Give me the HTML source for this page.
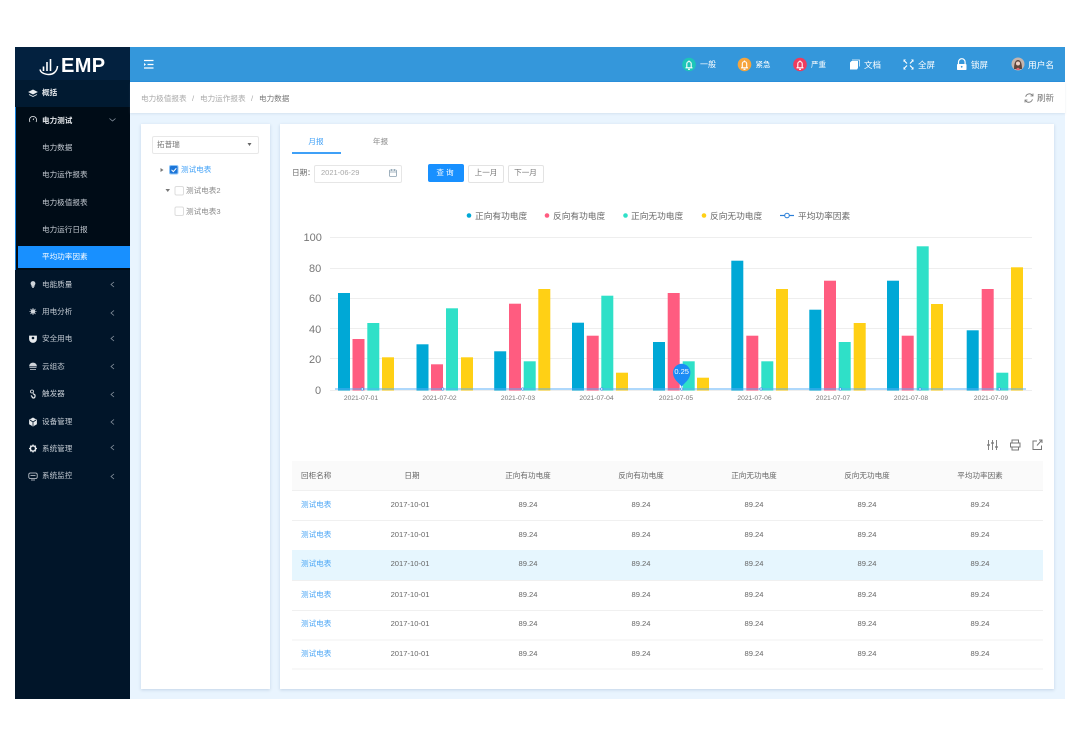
<!DOCTYPE html>
<html lang="zh"><head><meta charset="utf-8"><title>电力数据</title>
<style>
html,body{margin:0;padding:0;width:1080px;height:756px;overflow:hidden;background:#fff;font-family:"Liberation Sans","Noto Sans CJK SC",sans-serif}
#w{position:absolute;left:0;top:0;width:1080px;height:756px;filter:blur(.3px)}
.b{position:absolute}
.t{position:absolute;white-space:nowrap;line-height:12px;height:12px;font-size:7.6px}
.c{transform:translateX(-50%)}
.m{color:#c3cad2;left:42px}
.h{color:#fff}
.g{color:#8a8f96}
.d{color:#777;font-size:6.7px}
.y{color:#777;font-size:11px}
.l{color:#4ba6f5;left:301px;font-size:7.6px}
.k{color:#666;font-size:7.6px}
svg{position:absolute;overflow:visible}
</style></head><body><div id="w">
<div class="b" style="left:15px;top:47px;width:1050px;height:652px;background:#e9f4fe"></div>
<!-- sidebar -->
<div class="b" style="left:15px;top:47px;width:115px;height:652px;background:#011529"></div>
<div class="b" style="left:15px;top:47px;width:115px;height:33px;background:#03213f"></div>
<div class="b" style="left:15px;top:80px;width:115px;height:27px;background:#011a31"></div>
<div class="b" style="left:15px;top:107px;width:115px;height:163px;background:#000c17"></div>
<div class="b" style="left:15px;top:107px;width:1px;height:163px;background:#1480dc"></div>
<div class="b" style="left:17.5px;top:246px;width:112.5px;height:22px;background:#1890ff"></div>
<svg style="left:0;top:0" width="130" height="90" fill="none" stroke="#fff">
<path d="M40 69.500c1 5 10.500 6.500 14.500 3 1.500-1.300 2.800-3.500 3-6.500" stroke-width="1.500"/>
<path d="M43.500 71v-4.500M47 71V62M50.500 71V59" stroke-width="1.600"/>
</svg>
<div class="t" style="left:61px;top:56px;height:20px;line-height:20px;font-size:20px;font-weight:700;color:#fff;letter-spacing:.4px">EMP</div>
<div class="t m" style="top:87px;color:#e2e6ea;font-weight:700">概括</div>
<div class="t m" style="top:114.500px;color:#e2e6ea;font-weight:700">电力测试</div>
<div class="t m" style="top:141.500px">电力数据</div>
<div class="t m" style="top:169px">电力运作报表</div>
<div class="t m" style="top:196.500px">电力极值报表</div>
<div class="t m" style="top:223.500px">电力运行日报</div>
<div class="t m" style="top:251px;color:#fff">平均功率因素</div>
<div class="t m" style="top:278.500px">电能质量</div>
<div class="t m" style="top:305.500px">用电分析</div>
<div class="t m" style="top:333px">安全用电</div>
<div class="t m" style="top:360.500px">云组态</div>
<div class="t m" style="top:388px">触发器</div>
<div class="t m" style="top:415.500px">设备管理</div>
<div class="t m" style="top:442.500px">系统管理</div>
<div class="t m" style="top:470px">系统监控</div>
<svg style="left:0;top:0" width="130" height="490" fill="none" stroke="#8b96a2" stroke-width=".8">
<path d="M109.500 118.500l3 2.500 3-2.500"/>
<path d="M114 282l-3 2.500 3 2.500M114 310.500l-3 2.500 3 2.500M114 336l-3 2.500 3 2.500M114 364l-3 2.500 3 2.500M114 392l-3 2.500 3 2.500M114 419.500l-3 2.500 3 2.500M114 445l-3 2.500 3 2.500M114 474l-3 2.500 3 2.500"/>
<!-- menu icons -->
<path d="M29 92l4-2 4 2-4 2z" fill="#e8ebee" stroke="#e8ebee"/><path d="M29 94.500l4 2 4-2" stroke="#e8ebee"/>
<path d="M30 122a3.600 3.600 0 1 1 6 0" stroke="#e8ebee"/><path d="M33 120l1-1.500" stroke="#e8ebee"/>
<path d="M33 281.500a2 2 0 0 1 1.300 3.500l-.3 1.500h-2l-.3-1.500a2 2 0 0 1 1.300-3.500zM32 287.500h2" fill="#cfd4da" stroke="#cfd4da"/>
<circle cx="33" cy="311.500" r="2.300" fill="#cfd4da" stroke="none"/><path d="M29.500 311.500h1M35.500 311.500h1M33 308v1M33 314v1M30.500 309l.8.8M34.700 313.200l.8.800M35.500 309l-.8.800M31.300 313.200l-.8.800" stroke="#cfd4da"/>
<path d="M29.500 336h7v3a3.500 3.500 0 0 1-7 0z" fill="#e8ebee" stroke="#e8ebee"/><circle cx="33" cy="338" r="1.300" fill="#011529" stroke="none"/>
<path d="M29.500 366a3.500 3 0 0 1 7 0z" fill="#cfd4da" stroke="#cfd4da"/><path d="M29.500 367.500h7M30 369.500h6" stroke="#cfd4da"/>
<circle cx="32" cy="391.500" r="1.500" stroke="#e8ebee"/><path d="M33 393.500l2 1.500v1.500a1.500 1.500 0 0 1-3 0l-1-1" stroke="#e8ebee" stroke-width="1.200"/>
<path d="M33 418l3.500 2v4l-3.500 2-3.500-2v-4z" fill="#e8ebee" stroke="#e8ebee"/><path d="M33 422l3-2M33 422v4M33 422l-3-2" stroke="#011529"/>
<circle cx="33" cy="448.500" r="2.600" stroke="#e8ebee" stroke-width="1.500"/><path d="M33 444.500v1M33 451.500v1M29 448.500h1M36 448.500h1M30.200 445.700l.7.700M35.100 450.600l.7.700M35.800 445.700l-.7.700M30.900 450.600l-.7.700" stroke="#e8ebee" stroke-width="1.200"/>
<rect x="28.800" y="473" width="8.400" height="5.500" rx="1.500" stroke="#cfd4da"/><path d="M30.500 475.500h5M31 480h4" stroke="#cfd4da"/>
</svg>
<!-- header -->
<div class="b" style="left:130px;top:47px;width:935px;height:34px;background:#3497db"></div>
<div class="b" style="left:130px;top:81px;width:935px;height:1px;background:#2a8edb"></div>
<svg style="left:0;top:0" width="1080" height="90">
<path d="M144 60.500h9.500M147.500 64.500h6M144 68h9.500" stroke="#fff" stroke-width="1.300" fill="none"/><path d="M144 63l2 1.500-2 1.500z" fill="#fff"/>
<circle cx="689" cy="64.500" r="6.800" fill="#1dc5b8"/><circle cx="744.500" cy="64.500" r="6.800" fill="#f6a53c"/><circle cx="800" cy="64.500" r="6.800" fill="#ee3c5d"/>
<g fill="none" stroke="#fff" stroke-width="1.100">
<path d="M685.500 67.800h7M686.800 67.800v-4a2.200 2.200 0 0 1 4.400 0v4M688 69.300h2M689 60.500v1"/>
<path d="M741 67.800h7M742.300 67.800v-4a2.200 2.200 0 0 1 4.400 0v4M743.500 69.300h2M744.500 60.500v1"/>
<path d="M796.500 67.800h7M797.800 67.800v-4a2.200 2.200 0 0 1 4.400 0v4M799 69.300h2M800 60.500v1"/></g>
<path d="M850 62.500l1.500-1.500h6.500v7l-1 1.500h-7z" fill="#fff"/><path d="M852 60h7.500v6.500" fill="none" stroke="#fff" stroke-width=".7"/>
<g stroke="#fff" stroke-width="1.200" fill="none"><path d="M904 60.500l3 3M913 60.500l-3 3M904 68.500l3-3M913 68.500l-3-3"/></g>
<path d="M903.500 59.500h2.500l-2.500 2.500zM913.500 59.500h-2.500l2.500 2.500zM903.500 69.500h2.500l-2.500-2.500zM913.500 69.500h-2.500l2.500-2.500z" fill="#fff"/>
<path d="M958.500 64v-2a3.300 3.300 0 0 1 6.600 0v2" stroke="#fff" stroke-width="1.200" fill="none"/><rect x="957" y="64" width="9.500" height="6" rx=".8" fill="#fff"/><circle cx="961.700" cy="66.800" r=".9" fill="#3497db"/>
<circle cx="1018" cy="64" r="6.500" fill="#c5b5ad"/><path d="M1014 69c0-6 1.500-9 4-9s4 3 4 9z" fill="#5e463c"/><circle cx="1018" cy="63.500" r="2" fill="#f0d2c6"/><path d="M1016 70c.5-3 3.500-3 4 0z" fill="#e26a76"/>
</svg>
<div class="t h" style="left:700px;top:58.500px;font-size:8px">一般</div>
<div class="t h" style="left:755.500px;top:58.500px;font-size:7.500px">紧急</div>
<div class="t h" style="left:811px;top:58.500px;font-size:7.500px">严重</div>
<div class="t h" style="left:864px;top:58.500px;font-size:8.500px">文档</div>
<div class="t h" style="left:918px;top:58.500px;font-size:8.500px">全屏</div>
<div class="t h" style="left:971px;top:58.500px;font-size:8.500px">锁屏</div>
<div class="t h" style="left:1028px;top:58.500px;font-size:8.700px">用户名</div>
<!-- breadcrumb -->
<div class="b" style="left:130px;top:82px;width:935px;height:31px;background:#fff;box-shadow:0 1px 2px rgba(120,150,180,.18)"></div>
<div class="t" style="left:141px;top:92.500px;color:#a9a9a9">电力极值报表</div>
<div class="t" style="left:192px;top:92.500px;color:#a9a9a9">/</div>
<div class="t" style="left:200px;top:92.500px;color:#a9a9a9">电力运作报表</div>
<div class="t" style="left:251px;top:92.500px;color:#a9a9a9">/</div>
<div class="t" style="left:259px;top:92.500px;color:#777">电力数据</div>
<svg style="left:0;top:0" width="1060" height="110" fill="none" stroke="#777" stroke-width=".9"><path d="M1032.500 95.500a3.800 3.800 0 0 0-6.800 1.200M1025.500 100.500a3.800 3.800 0 0 0 6.900-1.200"/><path d="M1033 93.500v2.500h-2.500M1025 102.500V100h2.500" stroke-width=".8"/></svg>
<div class="t" style="left:1037px;top:91.500px;color:#777;font-size:8.500px">刷新</div>
<!-- tree card -->
<div class="b" style="left:141px;top:124px;width:129px;height:565px;background:#fff;box-shadow:0 1px 3px rgba(110,140,175,.3)"></div>
<div class="b" style="left:152px;top:135.500px;width:105px;height:16.500px;border:1px solid #e8e8e8;border-radius:2px"></div>
<div class="t" style="left:157px;top:138.500px;color:#777">拓普瑞</div>
<svg style="left:0;top:0" width="270" height="220">
<path d="M247.500 143h4l-2 3z" fill="#666"/>
<path d="M160.500 168l3 2-3 2z" fill="#777"/>
<path d="M165.500 189h4.500l-2.250 3z" fill="#777"/>
<rect x="169.500" y="165.500" width="8.500" height="8.500" rx="1.500" fill="#1c75d8" stroke="#8cc4f8"/>
<path d="M171.500 169.800l1.800 1.800 3-3.300" fill="none" stroke="#fff" stroke-width="1"/>
<rect x="175" y="186.500" width="8.500" height="8.500" rx="1.500" fill="#fff" stroke="#ddd"/>
<rect x="175" y="207" width="8.500" height="8.500" rx="1.500" fill="#fff" stroke="#ddd"/>
</svg>
<div class="t" style="left:181px;top:164px;color:#3fa0f7">测试电表</div>
<div class="t" style="left:186px;top:185px;color:#8a8a8a">测试电表2</div>
<div class="t" style="left:186px;top:205.500px;color:#8a8a8a">测试电表3</div>
<!-- main card -->
<div class="b" style="left:280px;top:124px;width:774px;height:565px;background:#fff;box-shadow:0 1px 3px rgba(110,140,175,.3)"></div>
<div class="t c" style="left:316px;top:135.500px;color:#3fa0f7">月报</div>
<div class="t c" style="left:380.500px;top:135.500px;color:#888">年报</div>
<div class="b" style="left:292px;top:152px;width:48.500px;height:1.500px;background:#3fa0f7"></div>
<div class="t" style="left:292px;top:167px;color:#666">日期：</div>
<div class="b" style="left:314px;top:164.500px;width:86px;height:16px;border:1px solid #e6e6e6;border-radius:2px"></div>
<div class="t" style="left:321px;top:167px;color:#a8a8a8;font-size:7.500px">2021-06-29</div>
<svg style="left:0;top:0" width="410" height="185" fill="none" stroke="#8ba0b0" stroke-width=".8"><rect x="389.500" y="170" width="7" height="6.500" rx="1"/><path d="M389.500 172h7M391.500 169v2M394.500 169v2"/></svg>
<div class="b" style="left:428px;top:164.300px;width:35.500px;height:17.500px;background:#1890ff;border-radius:2px"></div>
<div class="t c" style="left:446px;top:167px;color:#fff;letter-spacing:2px">查询</div>
<div class="b" style="left:468px;top:164.500px;width:34px;height:16px;border:1px solid #e3e3e3;border-radius:2px"></div>
<div class="t c" style="left:486px;top:167px;color:#777">上一月</div>
<div class="b" style="left:507.700px;top:164.500px;width:34px;height:16px;border:1px solid #e3e3e3;border-radius:2px"></div>
<div class="t c" style="left:525.500px;top:167px;color:#777">下一月</div>
<!-- legend -->
<svg style="left:0;top:0" width="800" height="225">
<circle cx="469" cy="215.500" r="2.300" fill="#00a8d6"/><circle cx="547" cy="215.500" r="2.300" fill="#ff5c80"/><circle cx="625.500" cy="215.500" r="2.300" fill="#2fe0c8"/><circle cx="704" cy="215.500" r="2.300" fill="#ffd015"/>
<path d="M780 215.500h14" stroke="#2b7fd8" stroke-width="1.200"/><circle cx="787" cy="215.500" r="2.300" fill="#fff" stroke="#2b7fd8"/>
</svg>
<div class="t" style="left:475px;top:209.500px;color:#666;font-size:8.700px">正向有功电度</div>
<div class="t" style="left:553px;top:209.500px;color:#666;font-size:8.700px">反向有功电度</div>
<div class="t" style="left:631px;top:209.500px;color:#666;font-size:8.700px">正向无功电度</div>
<div class="t" style="left:710px;top:209.500px;color:#666;font-size:8.700px">反向无功电度</div>
<div class="t" style="left:798px;top:209.500px;color:#666;font-size:8.700px">平均功率因素</div>
<!-- chart -->
<svg style="left:0;top:0" width="1080" height="410">
<g stroke="#eeeeee" stroke-width="1"><path d="M330 237.500H1032M330 268.500H1032M330 298.500H1032M330 328.500H1032M330 358.500H1032M330 390.500H1032"/></g>
<g fill="#00a8d6">
<rect x="338" y="293" width="12" height="97.500"/><rect x="416.500" y="344.300" width="12" height="46.200"/><rect x="494.200" y="351.300" width="12" height="39.200"/><rect x="572" y="322.700" width="12" height="67.800"/><rect x="653" y="342" width="12" height="48.500"/><rect x="731.300" y="260.700" width="12" height="129.800"/><rect x="809.300" y="309.700" width="12" height="80.800"/><rect x="887" y="280.700" width="12" height="109.800"/><rect x="966.700" y="330.300" width="12" height="60.200"/>
</g>
<g fill="#ff5c80">
<rect x="352.500" y="339" width="12" height="51.500"/><rect x="431" y="364.300" width="12" height="26.200"/><rect x="509" y="303.700" width="12" height="86.800"/><rect x="586.700" y="335.700" width="12" height="54.800"/><rect x="667.700" y="293" width="12" height="97.500"/><rect x="746.300" y="335.700" width="12" height="54.800"/><rect x="824" y="280.700" width="12" height="109.800"/><rect x="901.700" y="335.700" width="12" height="54.800"/><rect x="981.700" y="289" width="12" height="101.500"/>
</g>
<g fill="#2fe0c8">
<rect x="367.300" y="323" width="12" height="67.500"/><rect x="446" y="308.300" width="12" height="82.200"/><rect x="523.700" y="361.300" width="12" height="29.200"/><rect x="601.300" y="295.700" width="12" height="94.800"/><rect x="682.700" y="361.300" width="12" height="29.200"/><rect x="761.300" y="361.300" width="12" height="29.200"/><rect x="838.700" y="342" width="12" height="48.500"/><rect x="916.700" y="246.300" width="12" height="144.200"/><rect x="996.300" y="372.700" width="12" height="17.800"/>
</g>
<g fill="#ffd015">
<rect x="382" y="357.300" width="12" height="33.200"/><rect x="461" y="357.300" width="12" height="33.200"/><rect x="538.300" y="289" width="12" height="101.500"/><rect x="616" y="372.700" width="12" height="17.800"/><rect x="697" y="377.700" width="12" height="12.800"/><rect x="776" y="289" width="12" height="101.500"/><rect x="853.700" y="323" width="12" height="67.500"/><rect x="931" y="304" width="12" height="86.500"/><rect x="1011" y="267.300" width="12" height="123.200"/>
</g>
<path d="M335 389H1026" stroke="#58aef8" stroke-width="1.600" opacity=".65"/>
<g fill="#fff" stroke="#3c8fe8" stroke-width=".7"><circle cx="362.300" cy="389" r="1.200"/><circle cx="442.700" cy="389" r="1.200"/><circle cx="522.700" cy="389" r="1.200"/><circle cx="601.700" cy="389" r="1.200"/><circle cx="681.700" cy="389" r="1.200"/><circle cx="761" cy="389" r="1.200"/><circle cx="840.300" cy="389" r="1.200"/><circle cx="920" cy="389" r="1.200"/><circle cx="999.300" cy="389" r="1.200"/></g>
<path d="M681.700 387c-2-4-8.700-7-8.700-14.500a8.700 8.700 0 0 1 17.400 0c0 7.500-6.700 10.500-8.700 14.500z" fill="#1c8cf5"/>
</svg>
<div class="t c" style="left:681.700px;top:366px;color:#fff;font-size:7.500px">0.25</div>
<div class="t y" style="left:303.500px;top:231.500px">100</div>
<div class="t y" style="left:309px;top:262.500px">80</div>
<div class="t y" style="left:309px;top:293px">60</div>
<div class="t y" style="left:309px;top:323.500px">40</div>
<div class="t y" style="left:309px;top:354px">20</div>
<div class="t y" style="left:315px;top:385px">0</div>
<div class="t c d" style="left:361px;top:393px">2021-07-01</div>
<div class="t c d" style="left:439.500px;top:393px">2021-07-02</div>
<div class="t c d" style="left:518px;top:393px">2021-07-03</div>
<div class="t c d" style="left:596.500px;top:393px">2021-07-04</div>
<div class="t c d" style="left:676px;top:393px">2021-07-05</div>
<div class="t c d" style="left:754.500px;top:393px">2021-07-06</div>
<div class="t c d" style="left:833px;top:393px">2021-07-07</div>
<div class="t c d" style="left:911px;top:393px">2021-07-08</div>
<div class="t c d" style="left:991px;top:393px">2021-07-09</div>
<!-- toolbar -->
<svg style="left:0;top:0" width="1050" height="455" fill="none" stroke="#777" stroke-width=".9">
<path d="M988.500 440v10M992.500 440v10M996.500 440v10" stroke-width=".9"/><path d="M987 445h3M991 443h3M995 447h3" stroke-width="1.300"/>
<path d="M1012 443v-3h6.500v3M1010.500 443h9.500v4h-9.500zM1012 447v3h6.500v-3" stroke-width="1"/>
<path d="M1037 441h-4v8.500h8.500v-4M1037 445.500l4.500-5M1039 440h3v3" stroke-width="1"/>
</svg>
<!-- table -->
<div class="b" style="left:292px;top:461px;width:751px;height:29.500px;background:#fafafa"></div>
<div class="b" style="left:292px;top:549.500px;width:751px;height:30.500px;background:#e6f6fe"></div>
<svg style="left:0;top:0" width="1050" height="680"><path d="M292 490.500H1043M292 520.500H1043M292 610.500H1043M292 640H1043M292 669H1043M292 580.500H1043" stroke="#f0f0f0" stroke-width="1" fill="none"/></svg>
<div class="t k" style="left:301px;top:470px">回柜名称</div>
<div class="t c k" style="left:412px;top:470px">日期</div>
<div class="t c k" style="left:528px;top:470px">正向有功电度</div>
<div class="t c k" style="left:641px;top:470px">反向有功电度</div>
<div class="t c k" style="left:754px;top:470px">正向无功电度</div>
<div class="t c k" style="left:867px;top:470px">反向无功电度</div>
<div class="t c k" style="left:980px;top:470px">平均功率因素</div>

<div class="t l" style="top:499px">测试电表</div><div class="t c k" style="left:410px;top:499px">2017-10-01</div><div class="t c k" style="left:528px;top:499px">89.24</div><div class="t c k" style="left:641px;top:499px">89.24</div><div class="t c k" style="left:754px;top:499px">89.24</div><div class="t c k" style="left:867px;top:499px">89.24</div><div class="t c k" style="left:980px;top:499px">89.24</div>
<div class="t l" style="top:528.500px">测试电表</div><div class="t c k" style="left:410px;top:528.500px">2017-10-01</div><div class="t c k" style="left:528px;top:528.500px">89.24</div><div class="t c k" style="left:641px;top:528.500px">89.24</div><div class="t c k" style="left:754px;top:528.500px">89.24</div><div class="t c k" style="left:867px;top:528.500px">89.24</div><div class="t c k" style="left:980px;top:528.500px">89.24</div>
<div class="t l" style="top:558px">测试电表</div><div class="t c k" style="left:410px;top:558px">2017-10-01</div><div class="t c k" style="left:528px;top:558px">89.24</div><div class="t c k" style="left:641px;top:558px">89.24</div><div class="t c k" style="left:754px;top:558px">89.24</div><div class="t c k" style="left:867px;top:558px">89.24</div><div class="t c k" style="left:980px;top:558px">89.24</div>
<div class="t l" style="top:588.500px">测试电表</div><div class="t c k" style="left:410px;top:588.500px">2017-10-01</div><div class="t c k" style="left:528px;top:588.500px">89.24</div><div class="t c k" style="left:641px;top:588.500px">89.24</div><div class="t c k" style="left:754px;top:588.500px">89.24</div><div class="t c k" style="left:867px;top:588.500px">89.24</div><div class="t c k" style="left:980px;top:588.500px">89.24</div>
<div class="t l" style="top:618px">测试电表</div><div class="t c k" style="left:410px;top:618px">2017-10-01</div><div class="t c k" style="left:528px;top:618px">89.24</div><div class="t c k" style="left:641px;top:618px">89.24</div><div class="t c k" style="left:754px;top:618px">89.24</div><div class="t c k" style="left:867px;top:618px">89.24</div><div class="t c k" style="left:980px;top:618px">89.24</div>
<div class="t l" style="top:647.500px">测试电表</div><div class="t c k" style="left:410px;top:647.500px">2017-10-01</div><div class="t c k" style="left:528px;top:647.500px">89.24</div><div class="t c k" style="left:641px;top:647.500px">89.24</div><div class="t c k" style="left:754px;top:647.500px">89.24</div><div class="t c k" style="left:867px;top:647.500px">89.24</div><div class="t c k" style="left:980px;top:647.500px">89.24</div>
</div></body></html>
